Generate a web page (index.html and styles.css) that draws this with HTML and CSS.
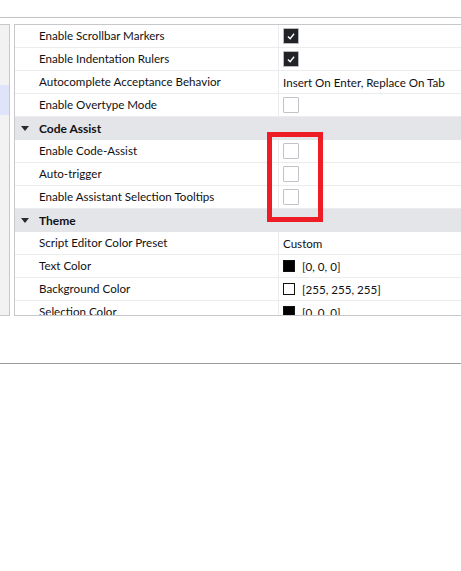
FILE: index.html
```html
<!DOCTYPE html>
<html lang="en">
<head>
    <meta charset="UTF-8">
    <title>Script Editor Settings</title>
    <link rel="stylesheet" href="styles.css">
</head>
<body>
    <div class="topbar"></div>
    <div class="window">
        <div class="panels">
            <div class="sidebar">
                <div class="side-sel"></div>
            </div>
            <div class="tree">
                <div class="row">
                    <div class="label">Enable Scrollbar Markers</div>
                    <div class="value"><span class="check on"><svg viewBox="0 0 16 16"><polyline points="4.5,8.5 7,11 11.5,5.5"/></svg></span></div>
                </div>
                <div class="row">
                    <div class="label">Enable Indentation Rulers</div>
                    <div class="value"><span class="check on"><svg viewBox="0 0 16 16"><polyline points="4.5,8.5 7,11 11.5,5.5"/></svg></span></div>
                </div>
                <div class="row">
                    <div class="label">Autocomplete Acceptance Behavior</div>
                    <div class="value">Insert On Enter, Replace On Tab</div>
                </div>
                <div class="row">
                    <div class="label">Enable Overtype Mode</div>
                    <div class="value"><span class="check"></span></div>
                </div>
                <div class="group"><span class="caret"></span>Code Assist</div>
                <div class="row">
                    <div class="label">Enable Code-Assist</div>
                    <div class="value"><span class="check"></span></div>
                </div>
                <div class="row">
                    <div class="label">Auto-trigger</div>
                    <div class="value"><span class="check"></span></div>
                </div>
                <div class="row">
                    <div class="label">Enable Assistant Selection Tooltips</div>
                    <div class="value"><span class="check"></span></div>
                </div>
                <div class="group"><span class="caret"></span>Theme</div>
                <div class="row">
                    <div class="label">Script Editor Color Preset</div>
                    <div class="value">Custom</div>
                </div>
                <div class="row">
                    <div class="label">Text Color</div>
                    <div class="value"><span class="swatch" style="background:#000"></span>[0, 0, 0]</div>
                </div>
                <div class="row">
                    <div class="label">Background Color</div>
                    <div class="value"><span class="swatch" style="background:#fff"></span>[255, 255, 255]</div>
                </div>
                <div class="row">
                    <div class="label">Selection Color</div>
                    <div class="value"><span class="swatch" style="background:#000"></span>[0, 0, 0]</div>
                </div>
                <div class="highlight"></div>
            </div>
        </div>
    </div>
</body>
</html>
```

FILE: styles.css
```css
body {
    margin: 0;
    background: #fff;
    font-family: Lato, "Noto Sans", sans-serif;
    font-size: 11.6px;
    color: #111114;
}
.topbar {
    height: 17px;
    border-bottom: 1px solid #c8c8cc;
}
.window {
    height: 346px;
    padding-top: 6px;
    box-sizing: border-box;
    border-bottom: 1px solid #9c9c9c;
    box-shadow: 0 5px 8px rgba(0, 0, 0, 0.16);
    overflow: hidden;
    position: relative;
}
.panels {
    display: flex;
    gap: 4px;
    height: 292px;
}
.sidebar {
    width: 9px;
    background: #f2f2f3;
    border-top: 1px solid #c8c8cc;
    border-right: 1px solid #c8c8cc;
    border-bottom: 1px solid #c8c8cc;
    padding-top: 60px;
}
.side-sel {
    height: 30px;
    background: #dfe4fb;
}
.tree {
    flex: 1;
    position: relative;
    border-top: 1px solid #c8c8cc;
    border-left: 1px solid #c8c8cc;
    border-bottom: 1px solid #c8c8cc;
    overflow: hidden;
}
.row {
    display: flex;
    height: 22px;
    border-bottom: 1px solid #ececee;
}
.label {
    width: 239px;
    padding-left: 24px;
    border-right: 1px solid #ececee;
    line-height: 22px;
    white-space: nowrap;
}
.value {
    flex: 1;
    display: flex;
    align-items: center;
    padding-left: 4px;
    white-space: nowrap;
}
.group {
    display: flex;
    align-items: center;
    height: 23px;
    background: #e4e5e8;
    font-weight: bold;
    font-size: 12px;
    padding-left: 6px;
}
.caret {
    width: 0;
    height: 0;
    border-left: 4px solid transparent;
    border-right: 4px solid transparent;
    border-top: 5px solid #2a2a2e;
    margin-right: 10px;
}
.check {
    width: 14px;
    height: 14px;
    border: 1px solid #c2c2c8;
    border-radius: 1px;
    background: #fff;
    display: inline-block;
}
.check.on {
    background: #222327;
    border-color: #b8b8be;
}
.check svg {
    display: block;
    width: 14px;
    height: 14px;
    fill: none;
    stroke: #fff;
    stroke-width: 1.6;
}
.swatch {
    width: 10px;
    height: 10px;
    border: 1px solid #111;
    margin-right: 7px;
}
.highlight {
    position: absolute;
    left: 252px;
    top: 107px;
    width: 46px;
    height: 80px;
    border: 5px solid #ee1c25;
}
```
